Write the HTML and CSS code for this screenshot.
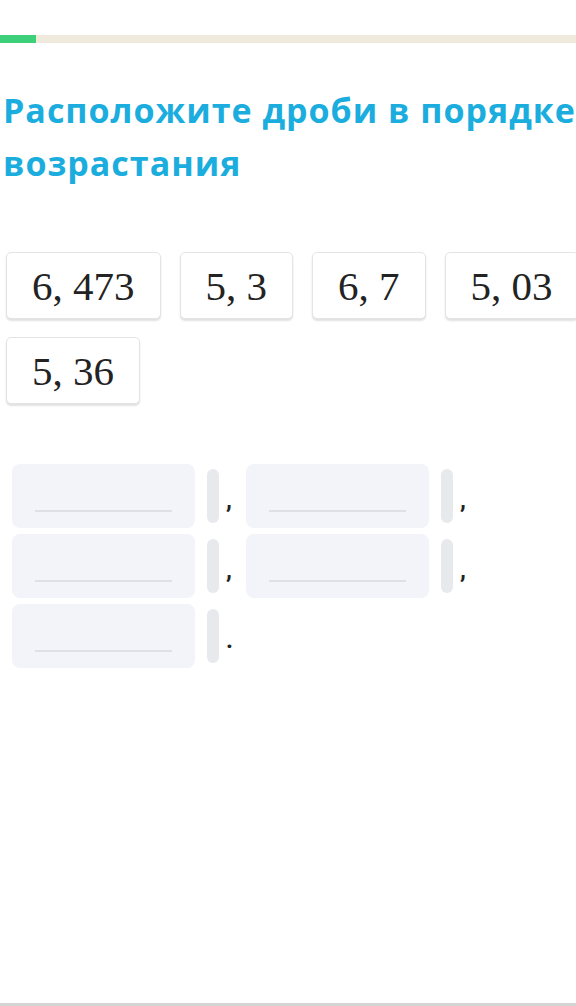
FILE: index.html
```html
<!DOCTYPE html>
<html lang="ru">
<head>
    <meta charset="UTF-8">
    <meta name="viewport" content="width=device-width, initial-scale=1.0">
    <title>Задание</title>
    <link rel="stylesheet" href="styles.css">
</head>
<body>

    <div class="page">
        <div class="progress">
            <div class="progress-fill"></div>
        </div>

        <h1 class="title">Расположите дроби в порядке<br>возрастания</h1>

        <div class="chips">
            <div class="chip">6, 473</div>
            <div class="chip">5, 3</div>
            <div class="chip">6, 7</div>
            <div class="chip">5, 03</div>
            <div class="chip">5, 36</div>
        </div>

        <div class="answer">
            <div class="group">
                <div class="slot"><div class="slot-line"></div></div>
                <div class="handle"></div>
                <span class="punct">,</span>
            </div>
            <div class="group">
                <div class="slot"><div class="slot-line"></div></div>
                <div class="handle"></div>
                <span class="punct">,</span>
            </div>
            <div class="group">
                <div class="slot"><div class="slot-line"></div></div>
                <div class="handle"></div>
                <span class="punct">,</span>
            </div>
            <div class="group">
                <div class="slot"><div class="slot-line"></div></div>
                <div class="handle"></div>
                <span class="punct">,</span>
            </div>
            <div class="group">
                <div class="slot"><div class="slot-line"></div></div>
                <div class="handle"></div>
                <span class="punct">.</span>
            </div>
        </div>

        <div class="bottom-bar"></div>
    </div>

</body>
</html>
```

FILE: styles.css
```css
* {
    box-sizing: border-box;
    margin: 0;
    padding: 0;
}

body {
    background: #ffffff;
    font-family: Roboto, "Liberation Sans", sans-serif;
    overflow: hidden;
}

.page {
    min-height: 100vh;
    display: flex;
    flex-direction: column;
    overflow: hidden;
}

.progress {
    margin-top: 35px;
    height: 8px;
    background: #efeadb;
}

.progress-fill {
    width: 36px;
    height: 100%;
    background: #3ecf7b;
}

.title {
    margin-top: 41px;
    padding-left: 3px;
    font-family: "Open Sans", Roboto, sans-serif;
    font-size: 34px;
    line-height: 53px;
    font-weight: 700;
    letter-spacing: 1px;
    color: #1badde;
    white-space: nowrap;
}

.chips {
    margin-top: 62px;
    margin-right: -40px;
    padding-left: 6px;
    display: flex;
    flex-wrap: wrap;
    gap: 18px 19px;
}

.chip {
    height: 67px;
    padding: 0 25px;
    display: flex;
    align-items: center;
    border: 1px solid #e4e4e4;
    border-radius: 5px;
    box-shadow: 0 2px 2px rgba(0, 0, 0, 0.12);
    background: #fff;
    font-family: "Liberation Serif", serif;
    font-size: 41px;
    color: #232323;
}

.answer {
    margin-top: 60px;
    padding-left: 12px;
    display: flex;
    flex-wrap: wrap;
    row-gap: 6px;
    width: 500px;
}

.group {
    display: flex;
    align-items: center;
}

.slot {
    width: 183px;
    height: 64px;
    padding: 0 23px 16px;
    display: flex;
    align-items: flex-end;
    background: #f3f4f9;
    border-radius: 8px;
}

.slot-line {
    width: 100%;
    height: 2px;
    background: #dfe0e6;
}

.handle {
    width: 12px;
    height: 54px;
    margin-left: 12px;
    background: #e8e9ed;
    border-radius: 6px;
}

.punct {
    width: 27px;
    padding-left: 7px;
    align-self: flex-start;
    margin-top: 26px;
    font-size: 24px;
    line-height: 20px;
    font-weight: 700;
    color: #222;
}

.bottom-bar {
    margin-top: auto;
    height: 3px;
    background: #d4d4d4;
}
```
